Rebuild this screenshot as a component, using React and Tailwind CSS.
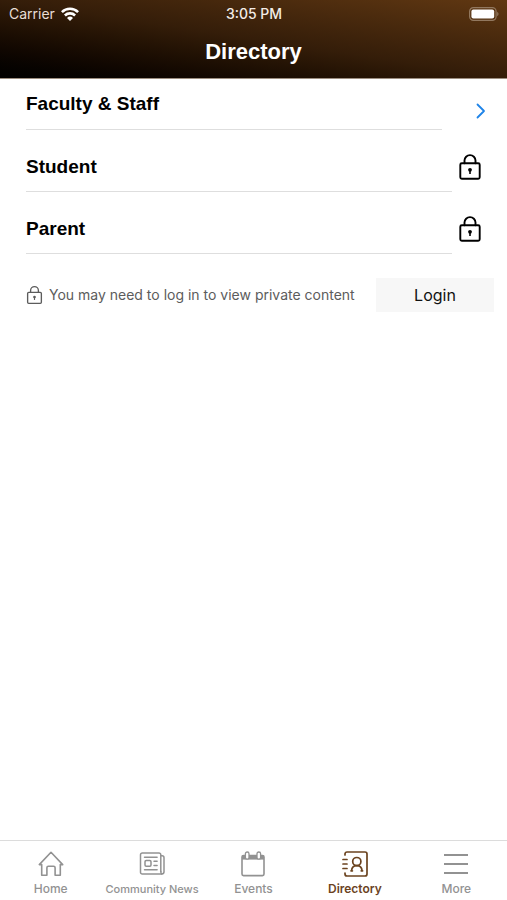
import React from 'react';

const strokeProps = {
  fill: 'none',
  stroke: 'currentColor',
  strokeLinecap: 'round',
  strokeLinejoin: 'round'
};

function LockIcon({ className, strokeWidth = 1.9 }) {
  return (
    <svg viewBox="0 0 24 28" className={className} aria-hidden="true">
      <g {...strokeProps} strokeWidth={strokeWidth}>
        <rect x="2.3" y="10.3" width="19.4" height="15.5" rx="1.5" />
        <path d="M6.5 10.3V7.6a5.5 5.5 0 0 1 11 0v2.7" />
      </g>
      <circle cx="12" cy="16.8" r="1.9" fill="currentColor" />
      <path d="M12 17v4" stroke="currentColor" strokeWidth="1.6" />
    </svg>
  );
}

function WifiIcon() {
  return (
    <svg viewBox="0 0 18 14" className="h-[14px] w-[18px] text-white" aria-hidden="true">
      <g fill="none" stroke="currentColor" strokeWidth="2.6">
        <path d="M.9 5.1a11.5 11.5 0 0 1 16.2 0" />
        <path d="M3.9 8.5a7.3 7.3 0 0 1 10.2 0" />
      </g>
      <path d="M9 14 6 10.9a4.3 4.3 0 0 1 6 0z" fill="currentColor" />
    </svg>
  );
}

function BatteryIcon() {
  return (
    <svg viewBox="0 0 30 14" className="h-[14px] w-[30px]" aria-hidden="true">
      <rect x=".6" y=".6" width="26.5" height="12.8" rx="3.8" fill="none" stroke="#92785f" strokeWidth="1.2" />
      <rect x="2.4" y="2.4" width="22.8" height="9.2" rx="2" fill="#fff" />
      <path d="M28.2 4.8c1.8.7 1.8 3.7 0 4.4z" fill="#92785f" />
    </svg>
  );
}

function HomeIcon() {
  return (
    <svg viewBox="0 0 26 26" className="size-[26px]" aria-hidden="true">
      <path
        {...strokeProps}
        strokeWidth="1.6"
        d="M1.3 13.6 13 1.3l11.7 12.3h-2.4v10.6h-5.2v-7.4a1.5 1.5 0 0 0-1.5-1.5h-5.2a1.5 1.5 0 0 0-1.5 1.5v7.4H3.7V13.6z"
      />
    </svg>
  );
}

function NewsIcon() {
  return (
    <svg viewBox="0 0 26 26" className="size-[26px]" aria-hidden="true">
      <g {...strokeProps} strokeWidth="1.5">
        <path d="M21.8 20.5V3.8A1.8 1.8 0 0 0 20 2H3.3a1.8 1.8 0 0 0-1.8 1.8v17.4A1.8 1.8 0 0 0 3.3 23h19.5a2.2 2.2 0 0 0 2.2-2.2V6.7a1.9 1.9 0 0 0-1.9-1.9h-1.3" />
        <path d="M21.8 20.5c0 1.4.3 2.1 1 2.5" />
        <path d="M5.5 6.2h12.6M5.5 18.8h12.6M15 10.2h3.1M15 14.6h3.1" />
        <rect x="6" y="9.5" width="6" height="5.8" rx="1.2" />
      </g>
    </svg>
  );
}

function EventsIcon() {
  return (
    <svg viewBox="0 0 26 26" className="size-[26px]" aria-hidden="true">
      <rect x="2" y="4.6" width="22" height="20" rx="1.5" {...strokeProps} strokeWidth="1.6" />
      <path d="M2 4.6h22v4H2z" fill="currentColor" />
      <g fill="#fff" stroke="currentColor" strokeWidth="1.3">
        <rect x="5.4" y="1" width="3.6" height="7.2" rx="1.8" />
        <rect x="17" y="1" width="3.6" height="7.2" rx="1.8" />
      </g>
    </svg>
  );
}

function DirectoryIcon() {
  return (
    <svg viewBox="0 0 26 26" className="size-[26px]" aria-hidden="true">
      <g {...strokeProps} strokeWidth="1.7">
        <path d="M3 4V3a2 2 0 0 1 2-2h18a2 2 0 0 1 2 2v20a2 2 0 0 1-2 2H5a2 2 0 0 1-2-2v-1" />
        <path d="M1 8.5h4M1 13h4M1 17.5h4" />
        <circle cx="14.8" cy="10.6" r="4.1" />
        <path d="M9.5 19.8c.3-3 2.2-5.1 5.3-5.1s5 2.1 5.3 5.1M9 19.8h1.4M19.2 19.8h1.4" />
      </g>
    </svg>
  );
}

function MoreIcon() {
  return (
    <svg viewBox="0 0 26 26" className="size-[26px]" aria-hidden="true">
      <path d="M1 4h24M1 13h24M1 22h24" stroke="currentColor" strokeWidth="2" />
    </svg>
  );
}

const privateLists = ['Student', 'Parent'];

const tabs = [
  { label: 'Home', Icon: HomeIcon },
  { label: 'Community News', Icon: NewsIcon, small: true },
  { label: 'Events', Icon: EventsIcon },
  { label: 'Directory', Icon: DirectoryIcon, active: true },
  { label: 'More', Icon: MoreIcon }
];

export default function App() {
  return (
    <div className="flex min-h-screen flex-col bg-white font-['Inter','Liberation_Sans',sans-serif]">
      {/* Header */}
      <header className="border-b border-[#9c8e80] bg-linear-to-tr from-[#020100] via-[#341d09] to-[#613812] text-white">
        <div className="grid grid-cols-3 items-center pt-1 pr-2 pl-[9px] text-[14px] leading-5">
          <div className="flex items-center gap-[6px] text-[#e8ded6]">
            <span>Carrier</span>
            <WifiIcon />
          </div>
          <span className="text-center font-medium text-[#f3ece6]">3:05 PM</span>
          <div className="flex justify-end">
            <BatteryIcon />
          </div>
        </div>
        <h1 className="pt-[13px] pb-[11px] text-center font-['Liberation_Sans',sans-serif] text-[22px] leading-[30px] font-bold">
          Directory
        </h1>
      </header>

      {/* Directory lists */}
      <main className="flex-1 pl-[26px]">
        <ul className="font-['Liberation_Sans',sans-serif] text-[19px] leading-6 font-bold text-black">
          <li>
            <a href="#faculty" className="flex">
              <span className="flex-1 border-b border-[#dedede] py-[13px]">Faculty &amp; Staff</span>
              <span className="flex w-[65px] items-center justify-center pt-3 pl-3 text-[#1f84e8]">
                <svg viewBox="0 0 10 16" className="h-4 w-[10px]" aria-hidden="true">
                  <path d="m1.5 1.5 6.5 6.5-6.5 6.5" {...strokeProps} strokeWidth="1.8" />
                </svg>
              </span>
            </a>
          </li>
          {privateLists.map((name) => (
            <li key={name}>
              <a href={`#${name.toLowerCase()}`} className="flex">
                <span className="flex-1 border-b border-[#dedede] pt-[25px] pb-3">{name}</span>
                <span className="flex w-[55px] items-center pt-3 pl-[6px]">
                  <LockIcon className="h-7 w-6" />
                </span>
              </a>
            </li>
          ))}
        </ul>

        <div className="mt-6 flex items-center justify-between pr-[13px]">
          <p className="flex items-center gap-[6px] text-[14px] leading-5 whitespace-nowrap text-[#5c5c5c]">
            <LockIcon className="h-5 w-[17px]" />
            You may need to log in to view private content
          </p>
          <button type="button" className="w-[118px] bg-[#f7f7f7] py-[5px] text-[16px] leading-6 text-[#111]">
            Login
          </button>
        </div>
      </main>

      {/* Tab bar */}
      <nav className="grid grid-cols-5 border-t border-[#dcdcdc] pt-[10px] pb-px">
        {tabs.map(({ label, Icon, active, small }) => (
          <a
            key={label}
            href={`#${label.toLowerCase().replace(' ', '-')}`}
            aria-current={active ? 'page' : undefined}
            className={`flex flex-col items-center gap-0.5 leading-5 whitespace-nowrap ${
              active ? 'font-semibold text-[#6b431f]' : 'font-medium text-[#929292]'
            } ${small ? 'text-[11px]' : 'text-[12px]'}`}
          >
            <Icon />
            {label}
          </a>
        ))}
      </nav>
    </div>
  );
}
